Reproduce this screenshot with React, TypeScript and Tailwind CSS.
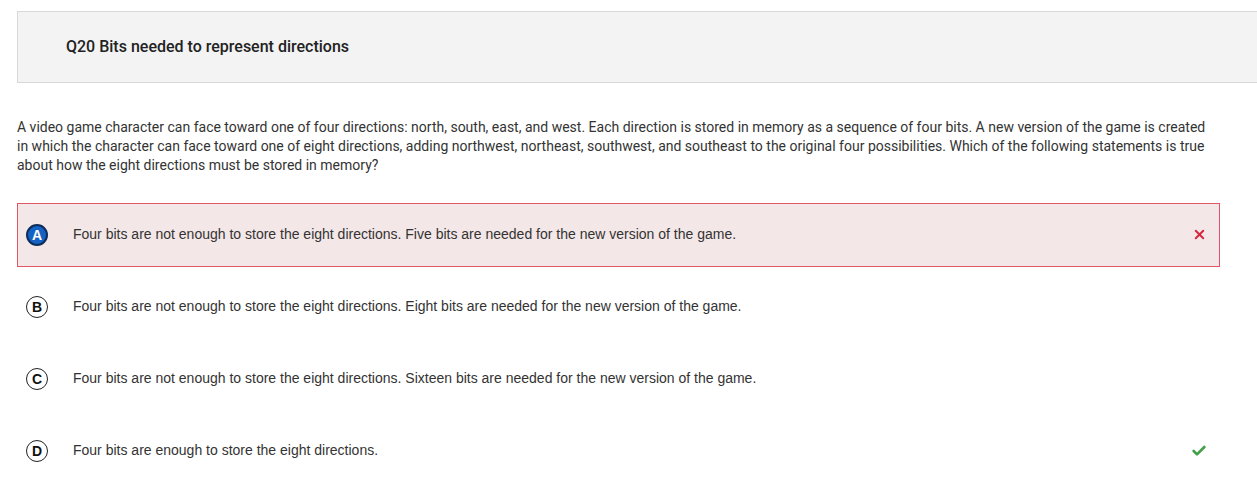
import { Check, X } from "lucide-react";

const options = [
  { key: "A", text: "Four bits are not enough to store the eight directions. Five bits are needed for the new version of the game.", selected: true, wrong: true },
  { key: "B", text: "Four bits are not enough to store the eight directions. Eight bits are needed for the new version of the game." },
  { key: "C", text: "Four bits are not enough to store the eight directions. Sixteen bits are needed for the new version of the game." },
  { key: "D", text: "Four bits are enough to store the eight directions.", correct: true },
];

function Letter({ k, selected }: { k: string; selected?: boolean }) {
  if (selected) {
    return (
      <span className="flex h-[22px] w-[22px] items-center justify-center rounded-full border-2 border-[#0d2d5a] bg-[#1463c4] text-[14px] font-bold leading-none text-white">
        {k}
      </span>
    );
  }
  return (
    <span className="flex h-[22px] w-[22px] items-center justify-center rounded-full border-[1.5px] border-[#222] bg-white text-[14px] font-bold leading-none text-[#111]">
      {k}
    </span>
  );
}

export default function App() {
  return (
    <div className="h-[486px] w-[1257px] overflow-hidden bg-white pl-[17px] pt-[11px]">
      <div className="flex h-[72px] items-center border border-r-0 border-[#d8d8d8] bg-[#f3f3f3] pl-[48px]">
        <h2 className="font-['Roboto',sans-serif] text-[16px] font-medium text-[#222]">
          Q20 Bits needed to represent directions
        </h2>
      </div>

      <div className="w-[1203px]">
        <p className="mt-[35px] w-[1198px] font-['Roboto',sans-serif] text-[14px] leading-[19px] text-[#333]">
          A video game character can face toward one of four directions: north, south, east, and west. Each direction is stored in memory as a sequence of four bits. A new version of the game is created in which the character can face toward one of eight directions, adding northwest, northeast, southwest, and southeast to the original four possibilities. Which of the following statements is true about how the eight directions must be stored in memory?
        </p>

        <div className="mt-[28px] flex flex-col gap-[8px] font-['Liberation_Sans',Arial,sans-serif]">
          {options.map((o) => (
            <div
              key={o.key}
              className={`flex h-[64px] items-center border pb-[1px] pl-[8px] pr-[12px] ${
                o.selected ? "border-[#df5766] bg-[#f3e7e7]" : "border-transparent bg-white"
              }`}
            >
              <Letter k={o.key} selected={o.selected} />
              <span className="ml-[25px] flex-1 text-[14px] text-[#333]">{o.text}</span>
              {o.wrong && <X className="h-[15px] w-[15px] text-[#d6283f]" strokeWidth={3} />}
              {o.correct && <Check className="h-[16px] w-[16px] text-[#43a047]" strokeWidth={4} />}
            </div>
          ))}
        </div>
      </div>
    </div>
  );
}
